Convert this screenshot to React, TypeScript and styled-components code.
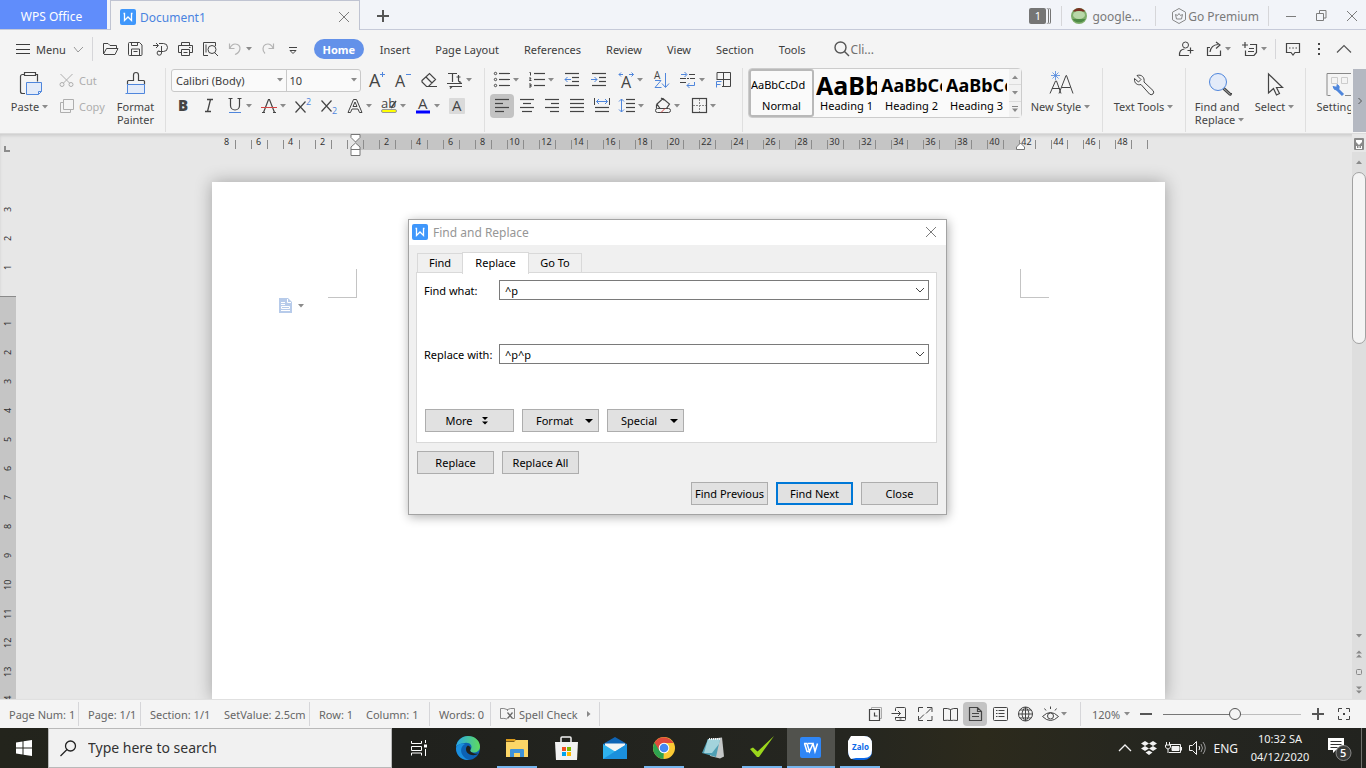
import React from "react";
import styled, { createGlobalStyle, css } from "styled-components";

const ui = `"Noto Sans", "Liberation Sans", sans-serif`;
const blue = "#4f86dc";

const Global = createGlobalStyle`
  *, *::before, *::after { box-sizing: border-box; }
  html, body, #root { height: 100%; }
  body { margin: 0; font: 11px/13px ${ui}; color: #3c3c3c; background: #e7e7e7; overflow: hidden; }
  button, input, select { font: inherit; color: inherit; margin: 0; padding: 0; border: 0; background: none; border-radius: 0; outline: 0; }
  button { cursor: pointer; white-space: nowrap; }
`;

/* ---------- shared pieces ---------- */

const Svg = styled.svg`
  flex: none;
  display: block;
  overflow: visible;
  fill: none;
  stroke: currentColor;
  text { stroke: none; fill: currentColor; font-family: "Open Sans", ${ui}; }
`;

type IconProps = { w?: number; h?: number; children: React.ReactNode };
const Icon = ({ w = 20, h = 20, children }: IconProps) => (
  <Svg width={w} height={h} viewBox={`0 0 ${w} ${h}`} aria-hidden="true">{children}</Svg>
);

const Caret = ({ up = false }: { up?: boolean }) => (
  <Icon w={8} h={4}>
    <path d={up ? "M1 4L4 0.5L7 4z" : "M1 0h6L4 3.5z"} fill="#8b8b8b" stroke="none" />
  </Icon>
);

const Spacer = styled.div`flex: 1;`;

const Rule = styled.span<{ $h: number }>`
  flex: none;
  width: 1px;
  height: ${(p) => p.$h}px;
  background: #d6d6d9;
`;

/* ---------- window frame ---------- */

const Shell = styled.div`
  display: flex;
  flex-direction: column;
  height: 100vh;
  overflow: hidden;
`;

const TitleBar = styled.header`
  flex: none;
  display: flex;
  height: 30px;
  background: #f2f4f9;
  box-shadow: inset 0 -1px #c6cad9;
`;

const OfficeTab = styled.button`
  width: 107px;
  height: 29px;
  margin-right: 3px;
  padding: 3px 4px 0 0;
  background: #608dfb;
  color: #fff;
  font-size: 12px;
`;

const DocTab = styled.div`
  display: flex;
  align-items: center;
  gap: 4px;
  width: 250px;
  padding: 3px 9px 0;
  border: solid #c0c4d2;
  border-width: 1px 1px 0;
  background: #f4f4f4;
  color: #4a83e0;
  font-size: 12px;
`;

const PlainButton = styled.button<{ $w: number }>`
  flex: none;
  display: flex;
  align-items: center;
  justify-content: center;
  width: ${(p) => p.$w}px;
  color: #7c7c7c;
`;

const TitleRight = styled.div`
  display: flex;
  align-items: center;
  padding-top: 2px;
  color: #7a7a7a;
  font-size: 12px;
`;

const Badge = styled.span`
  width: 17px;
  height: 16px;
  border-radius: 2px;
  background: #757575;
  color: #fff;
  font-size: 11px;
  line-height: 16px;
  text-align: center;
  box-shadow: 2px 0 #f2f4f9, 3px 0 #757575, 4px 0 #f2f4f9, 5px 0 #757575;
`;

const UserName = styled.button`margin: 0 14px 0 5px;`;

const Premium = styled.button`
  display: flex;
  align-items: center;
  gap: 1px;
  margin: 0 9px 0 15px;
`;

const WindowButtons = styled.div`
  display: flex;
  padding-left: 9px;
`;

/* ---------- menu row ---------- */

const MenuRow = styled.nav`
  flex: none;
  display: flex;
  align-items: center;
  height: 38px;
  padding: 0 11px 0 16px;
  background: #f4f4f4;
`;

const MenuButton = styled.button`
  display: flex;
  align-items: center;
  gap: 6px;
  margin-right: 8px;
`;

const QuickTools = styled.div<{ $left: number; $gap?: number }>`
  display: flex;
  align-items: center;
  gap: ${(p) => p.$gap ?? 5}px;
  padding-left: ${(p) => p.$left}px;
`;

const Tool = styled.button<{ $on?: boolean; $dim?: boolean }>`
  flex: none;
  display: flex;
  align-items: center;
  height: 20px;
  color: ${(p) => (p.$dim ? "#b4b4b4" : "#444")};
  ${(p) => p.$on && css`
    background: #c3c3c3;
    border-radius: 2px;
    box-shadow: 0 0 0 2px #c3c3c3;
  `}
`;

const Tabs = styled.div`
  display: flex;
  align-items: center;
  gap: 25px;
`;

const Tab = styled.button`height: 20px;`;

const HomeTab = styled.button`
  width: 50px;
  height: 20px;
  margin: 0 16px 0 11px;
  border-radius: 10px;
  background: #6391e9;
  color: #fff;
  font-weight: 700;
`;

const SearchBox = styled.button`
  display: flex;
  align-items: center;
  gap: 1px;
  margin-left: 28px;
  color: #707070;
  font-size: 12px;
`;

/* ---------- ribbon ---------- */

const Ribbon = styled.section`
  flex: none;
  display: flex;
  height: 66px;
  background: #f4f4f4;
  box-shadow: inset 0 -1px #dcdcdc;
`;

const RibbonTrack = styled.div`
  flex: 1;
  min-width: 0;
  display: flex;
  height: 64px;
  overflow: hidden;
`;

const Group = styled.div<{ $l: number; $r: number; $gap?: number }>`
  flex: none;
  display: flex;
  align-items: flex-start;
  gap: ${(p) => p.$gap ?? 0}px;
  padding: 0 ${(p) => p.$r}px 0 ${(p) => p.$l}px;
  border-right: 1px solid #dfdfdf;
`;

const Rows = styled.div`
  display: flex;
  flex-direction: column;
  gap: 4px;
  padding-top: 1px;
`;

const Row = styled.div<{ $gap: number; $l?: number }>`
  display: flex;
  align-items: center;
  gap: ${(p) => p.$gap}px;
  height: 22px;
  padding-left: ${(p) => p.$l ?? 0}px;
`;

const BigButton = styled.button<{ $w: number }>`
  flex: none;
  display: flex;
  flex-direction: column;
  align-items: center;
  gap: 3px;
  width: ${(p) => p.$w}px;
  padding-top: 3px;
  color: #444;
`;

const BigLabel = styled.span`
  display: flex;
  align-items: center;
  text-align: center;
  gap: 2px;
`;

const SmallAction = styled.button`
  display: flex;
  align-items: center;
  gap: 4px;
  width: 46px;
  color: #aeaeae;
`;

const FontBox = styled.div`
  display: flex;
  width: 190px;
  height: 23px;
  border: 1px solid #c9c9c9;
  border-radius: 3px;
  background: #fafafa;
`;

const SelectWrap = styled.label<{ $w: number }>`
  display: flex;
  align-items: center;
  width: ${(p) => p.$w}px;
  padding: 0 2px 0 4px;
  & + & { border-left: 1px solid #c9c9c9; padding-left: 2px; }
`;

const Select = styled.select`
  flex: 1;
  min-width: 0;
  height: 20px;
  appearance: none;
`;

const Gallery = styled.div`
  display: flex;
  width: 274px;
  height: 50px;
  border: 1px solid #cccccc;
  border-radius: 4px;
  background: #fafafa;
`;

const StyleCard = styled.button<{ $on?: boolean }>`
  flex: none;
  display: flex;
  flex-direction: column;
  width: 65px;
  height: 48px;
  border: 2px solid ${(p) => (p.$on ? "#b9b9b9" : "transparent")};
  border-radius: 3px;
  overflow: hidden;
  color: #000;
`;

const Sample = styled.span<{ $size: number }>`
  width: 100%;
  height: 28px;
  overflow: hidden;
  font-size: ${(p) => p.$size}px;
  font-weight: ${(p) => (p.$size > 11 ? 700 : 400)};
  line-height: 28px;
  text-align: left;
`;

const SampleName = styled.span`
  width: 100%;
  text-align: center;
`;

const GalleryScroll = styled.div`
  flex: 1;
  display: flex;
  flex-direction: column;
`;

const GalleryButton = styled.button`
  flex: 1;
  display: flex;
  align-items: center;
  justify-content: center;
  background: #f2f2f2;
  & + & { border-top: 1px solid #dcdcdc; }
`;

const RibbonScroll = styled.button`
  width: 13px;
  height: 63px;
  margin: 1px 0 0 2px;
  display: flex;
  align-items: center;
  justify-content: center;
  background: #b4b8c1;
  color: #555;
`;

/* ---------- workspace ---------- */

const Workspace = styled.main`
  position: relative;
  flex: 1;
  min-height: 0;
  display: flex;
  background: #e7e7e7;
  overflow: hidden;
  box-shadow: inset 0 2px 3px #cfcfcf;
`;

const SideRuler = styled.div`
  flex: none;
  width: 16px;
  display: flex;
  flex-direction: column;
  color: #333;
  font-size: 9px;
`;

const Corner = styled.div`
  height: 61px;
  padding: 12px 0 0 4px;
  color: #8c8c8c;
`;

const SideNumber = styled.span`
  flex: none;
  width: 16px;
  height: 29px;
  line-height: 16px;
  text-align: center;
  writing-mode: vertical-rl;
  transform: rotate(180deg);
`;

const SideDark = styled.div`
  flex: 1;
  min-height: 0;
  margin-top: 14px;
  padding-top: 12px;
  border-top: 1px solid #8a8a8a;
  background: #c5c5c5;
  display: flex;
  flex-direction: column;
  overflow: hidden;
`;

const Canvas = styled.div`
  flex: 1;
  min-width: 0;
  display: flex;
  flex-direction: column;
  align-items: center;
`;

const TopRuler = styled.div`
  position: relative;
  flex: none;
  display: flex;
  height: 16px;
  background: linear-gradient(90deg, transparent 135px, #c5c5c5 135px, #c5c5c5 800px, transparent 800px);
  color: #333;
  font-size: 9px;
`;

const RulerCell = styled.span`
  width: 32px;
  height: 16px;
  line-height: 16px;
  padding-right: 19px;
  display: flex;
  justify-content: center;
  background:
    linear-gradient(#8c8c8c, #8c8c8c) 15px 6px / 1px 9px no-repeat,
    linear-gradient(#8c8c8c, #8c8c8c) 31px 6px / 1px 9px no-repeat;
`;

const Marker = styled.span<{ $x: number; $y: number }>`
  position: absolute;
  left: ${(p) => p.$x}px;
  top: ${(p) => p.$y}px;
  color: #777;
`;

const Page = styled.article`
  flex: 1;
  width: 953px;
  margin: 32px 0 0 9px;
  padding: 87px 116px 0;
  background: #fff;
  box-shadow: 0 0 16px rgba(0, 0, 0, 0.3);
`;

const Margins = styled.div`
  display: flex;
  justify-content: space-between;
`;

const Crop = styled.span<{ $side: "left" | "right" }>`
  width: 29px;
  height: 29px;
  border: 0 solid #c4c4c4;
  border-bottom-width: 1px;
  ${(p) => (p.$side === "left" ? "border-right-width" : "border-left-width")}: 1px;
`;

const PasteHint = styled.button`
  display: flex;
  align-items: center;
  gap: 5px;
  margin-left: -49px;
`;

const ScrollColumn = styled.div`
  flex: none;
  width: 14px;
  display: flex;
  flex-direction: column;
  align-items: center;
  background: #dedede;
  color: #8a8a8a;
`;

const ScrollTop = styled.button`
  width: 14px;
  height: 18px;
  background: #e7e7e7;
`;

const ScrollButton = styled.button`
  display: flex;
  align-items: center;
  justify-content: center;
  width: 14px;
  height: 18px;
`;

const ScrollUp = styled(ScrollButton)`height: 20px;`;

const Thumb = styled.div`
  width: 14px;
  height: 172px;
  border: 1px solid #a2a2a2;
  border-radius: 7px;
  background: #f4f4f4;
`;

/* ---------- dialog ---------- */

const Dialog = styled.form`
  position: absolute;
  top: 85px;
  left: calc(50% - 275px);
  width: 539px;
  border: 1px solid #a3a3a3;
  background: #f0f0f0;
  box-shadow: 1px 2px 10px rgba(0, 0, 0, 0.32);
  color: #000;
`;

const DialogTitle = styled.div`
  display: flex;
  align-items: center;
  gap: 5px;
  height: 25px;
  padding: 0 8px 1px 3px;
  background: #fff;
  color: #969696;
  font-size: 12px;
`;

const DialogTabs = styled.div`
  display: flex;
  align-items: flex-end;
  height: 28px;
  padding-left: 8px;
`;

const DialogTab = styled.button<{ $w: number; $on?: boolean }>`
  width: ${(p) => p.$w}px;
  height: ${(p) => (p.$on ? 22 : 20)}px;
  padding-bottom: 2px;
  border: 1px solid #d9d9d9;
  border-bottom: 0;
  ${(p) => p.$on && css`
    margin: 0 -1px -1px;
    background: #fff;
    z-index: 1;
  `}
`;

const DialogPanel = styled.div`
  display: flex;
  flex-direction: column;
  gap: 44px;
  height: 171px;
  margin: -1px 9px 8px 7px;
  padding: 7px 7px 10px;
  border: 1px solid #d9d9d9;
  background: #fff;
`;

const Field = styled.div`
  display: flex;
  align-items: center;
  height: 20px;
`;

const FieldLabel = styled.label`width: 75px; white-space: nowrap;`;

const Combo = styled.div`
  flex: 1;
  display: flex;
  align-items: center;
  height: 20px;
  border: 1px solid #7a7a7a;
  background: #fff;
`;

const ComboInput = styled.input`
  flex: 1;
  min-width: 0;
  height: 18px;
  padding-left: 5px;
`;

const ButtonRow = styled.div<{ $end?: boolean }>`
  display: flex;
  gap: 8px;
  padding: ${(p) => (p.$end ? "8px 8px 9px" : "0 8px")};
  justify-content: ${(p) => (p.$end ? "flex-end" : "flex-start")};
`;

const PanelButtons = styled.div`
  display: flex;
  gap: 8px;
  margin-top: auto;
  padding-left: 1px;
`;

const PushButton = styled.button<{ $wide?: boolean; $main?: boolean }>`
  display: flex;
  align-items: center;
  justify-content: center;
  gap: 8px;
  width: ${(p) => (p.$wide ? 89 : 77)}px;
  height: 23px;
  padding-right: ${(p) => (p.$wide ? 5 : 0)}px;
  border: ${(p) => (p.$main ? "2px solid #0078d7" : "1px solid #adadad")};
  background: #e1e1e1;
`;

const DropButton = styled(PushButton)`
  justify-content: space-between;
  padding: 0 5px 0 13px;
`;

/* ---------- status bar ---------- */

const StatusBar = styled.footer`
  flex: none;
  display: flex;
  align-items: center;
  height: 29px;
  background: #f4f4f4;
  border-top: 1px solid #e0e0e0;
  color: #666;
`;

const Stat = styled.span<{ $w: number }>`
  flex: none;
  display: flex;
  align-items: center;
  gap: 4px;
  width: ${(p) => p.$w}px;
  height: 24px;
  padding-left: 9px;
  white-space: nowrap;
`;

const SpellButton = styled.button`
  display: flex;
  align-items: center;
  gap: 4px;
`;

const ViewTools = styled.div`
  display: flex;
  align-items: center;
  gap: 5px;
  padding-right: 12px;
`;

const Zoom = styled.div`
  display: flex;
  align-items: center;
  padding: 0 8px 0 11px;
`;

const ZoomValue = styled.button`
  display: flex;
  align-items: center;
  gap: 3px;
  width: 42px;
`;

const Slider = styled.input`
  width: 138px;
  height: 14px;
  margin: 0 5px;
  appearance: none;
  background: linear-gradient(90deg, #777 52%, #bdbdbd 52%) center / 100% 1px no-repeat;
  &::-webkit-slider-thumb {
    appearance: none;
    width: 12px;
    height: 12px;
    border: 1px solid #555;
    border-radius: 50%;
    background: #f4f4f4;
  }
`;

/* ---------- task bar ---------- */

const TaskBar = styled.footer`
  flex: none;
  display: flex;
  height: 40px;
  background: linear-gradient(90deg, #23241c, #20211d 30%, #252620 62%, #2c2a1c 72%, #252620 85%, #22231f);
  color: #fff;
`;

const StartButton = styled.button`
  width: 48px;
  display: flex;
  align-items: center;
  justify-content: center;
`;

const SearchField = styled.label`
  display: flex;
  align-items: center;
  gap: 11px;
  width: 344px;
  margin-right: 3px;
  padding-left: 11px;
  border: 1px solid #b9b9b9;
  background: #f1f1f1;
  color: #222;
`;

const SearchInput = styled.input`
  flex: 1;
  min-width: 0;
  font-size: 14px;
  line-height: 20px;
  &::placeholder { color: #333; opacity: 1; }
`;

const Apps = styled.div`
  display: flex;
  gap: 1px;
`;

const AppButton = styled.button<{ $state?: "open" | "active" }>`
  width: 48px;
  height: 40px;
  display: flex;
  align-items: center;
  justify-content: center;
  ${(p) => p.$state === "open" && css`
    background: linear-gradient(#76b5ee, #76b5ee) center bottom / 40px 2px no-repeat;
  `}
  ${(p) => p.$state === "active" && css`
    background: linear-gradient(#76b5ee, #76b5ee) center bottom / 48px 2px no-repeat, #51524d;
  `}
`;

const Tray = styled.div`
  display: flex;
  align-items: center;
  gap: 4px;
  color: #f2f2f2;
`;

const TrayText = styled.span`
  margin: 0 7px 0 2px;
  font-size: 12px;
`;

const Clock = styled.time`
  width: 62px;
  font-size: 11px;
  line-height: 18px;
  text-align: center;
  white-space: nowrap;
`;

const Notices = styled.button`margin: 0 4px 0 12px;`;

const DesktopEdge = styled.button`
  align-self: stretch;
  width: 5px;
  border-left: 1px solid #70716d;
`;

/* ---------- icon drawings ---------- */

const WpsMark = ({ size }: { size: number }) => (
  <Svg width={size} height={size} viewBox="0 0 16 16" aria-hidden="true">
    <rect width="16" height="16" rx="2" fill="#3f97fb" stroke="none" />
    <path d="M3.5 4.5h1v7l3.500-3.500 3.500 3.500v-7h1" stroke="#fff" strokeWidth="1.300" />
  </Svg>
);

const Cross = ({ size = 12 }: { size?: number }) => (
  <Icon w={size} h={size}><path d={`M1 1L${size - 1} ${size - 1}M${size - 1} 1L1 ${size - 1}`} /></Icon>
);

const lines = (rows: [number, number, number][]) =>
  rows.map(([x1, x2, y], i) => <path key={i} d={`M${x1} ${y}.5H${x2}`} strokeWidth="1.200" />);

const quick = {
  open: <Icon><path d="M3.500 15V4.500h4.500l2 2h6.500v3M3.500 15l3-5.500H18L15 15.500H4" /></Icon>,
  save: <Icon><path d="M3.500 4.500a1 1 0 0 1 1-1h10l2.500 2.500v9.500a1 1 0 0 1-1 1h-11.500a1 1 0 0 1-1-1zM6.500 3.500v3h6v-3M6.500 16.500v-6.500h8v6.500M8.500 12.500h4" /></Icon>,
  pdf: <Icon><path d="M3 6.500h5M6 4l2.500 2.500L6 9M10 4.500h3.500a4 4 0 0 1 0 8H8.500M11.500 7v7a2.200 2.200 0 1 1-2.200-2.200M9 4.500h2.500" /></Icon>,
  print: <Icon><path d="M6.500 6.500v-3h8v3M6 13.500H3.500v-7h14v7H15M6.500 10.500h8v6h-8zM8.500 13.500h4M14 8.500h1.500" /></Icon>,
  preview: <Icon><path d="M8 16.500H3.500v-13h12V7M12 14.500a4 4 0 1 0 0-8 4 4 0 0 0 0 8M14.500 13.500l3.500 3.500M6 5.500v8" /></Icon>,
  undo: <Icon><path d="M4.500 4.500v5h5M5 9c2-4 5-4.500 7.500-3.500 4 2 3 8-2.500 10" strokeWidth="1.200" /></Icon>,
  redo: <Icon><path d="M15.500 4.500v5h-5M15 9c-2-4-5-4.500-7.500-3.500-3 1.500-3.500 6-.5 9" strokeWidth="1.200" /></Icon>,
  more: <Icon><path d="M6 8.500h8M7 11.500l3 3 3-3z" /></Icon>,
};

const A = ({ x = 3, y = 16, s = 17 }: { x?: number; y?: number; s?: number }) => (
  <text x={x} y={y} fontSize={s} fontWeight="400">A</text>
);

const fontIcons = {
  grow: <Icon><A x={2} s={18} y={17} /><path d="M15.500 2v5M13 4.500h5" stroke={blue} /></Icon>,
  shrink: <Icon><A x={2} s={16} y={17} /><path d="M13 4.500h5" stroke={blue} /></Icon>,
  erase: <Icon><path d="M3 10.500L10.500 3.500l6 6-7 7H7.500L3 12zM7 7l6 6M9 16.500h9" strokeWidth="1.200" /></Icon>,
  tt: <Icon><path d="M3 3.500h9M7.500 4v8M13.500 5v5.500q0 1.500 2 1M11.500 7h4M2 13.500h15M4.500 16.500H17M14 11.500l2.500 2M7 16.500l-2 2" strokeWidth="1.200" /></Icon>,
  bold: <Icon><text x="5" y="15" fontSize="15" fontWeight="800">B</text></Icon>,
  italic: <Icon><path d="M8 3.500h6M6 15.500h6M11.500 3.500l-3 12" strokeWidth="1.300" /></Icon>,
  underline: <Icon><path d="M5.500 3v6.500a4.500 4.500 0 0 0 9 0V3M3.500 2.500h4M12.500 2.500h4" strokeWidth="1.200" /><path d="M4 16.500h12" stroke={blue} /></Icon>,
  strike: <Icon><path d="M4.500 16.500L9.500 3.500h1L15.500 16.500M3 16.500h3M14 16.500h3" strokeWidth="1.200" /><path d="M2 11.500h16" stroke="#d64545" /></Icon>,
  sup: <Icon><path d="M2.500 5.500l10 11M12.500 5.500l-10 11" strokeWidth="1.200" /><text x="13" y="9" fontSize="9" style={{ fill: blue }}>2</text></Icon>,
  sub: <Icon><path d="M2.500 4.500l10 11M12.500 4.500l-10 11" strokeWidth="1.200" /><text x="13" y="18" fontSize="9" style={{ fill: blue }}>2</text></Icon>,
  outline: <Icon><path d="M3 16.500L8.500 3.500h3L17 16.500h-2.500l-1.500-3.500H7L5.500 16.500zM8 10.500h4L10 6z" /></Icon>,
  highlight: <Icon><text x="2" y="12" fontSize="13">ab</text><path d="M17 5l-5 7" strokeWidth="1.500" /><rect x="2.500" y="13.500" width="15" height="3" rx="1.500" fill="#ffff00" stroke="#999" /></Icon>,
  color: <Icon><A x={5} s={15} y={13} /><path d="M3 16h14" stroke="#0000ff" strokeWidth="3" /></Icon>,
  shade: <Icon><rect x="2" y="2" width="16" height="16" rx="1" fill="#dadada" stroke="none" /><A x={5} s={15} y={15} /></Icon>,
};

const paraIcons = {
  bullets: <Icon>{lines([[7, 18, 3], [7, 18, 9], [7, 18, 15]])}{[3.5, 9.5, 15.5].map((y) => <circle key={y} cx="3.500" cy={y} r="1.200" />)}</Icon>,
  numbers: <Icon>{lines([[7, 18, 3], [7, 18, 9], [7, 18, 15]])}<path d="M2.500 2.500h1v3M2 8h2l-1.500 2.500H4.500M2 14h2v3H2M4 15.500H2.500" /></Icon>,
  outdent: <Icon>{lines([[3, 17, 3], [10, 17, 7], [10, 17, 11], [3, 17, 15]])}<path d="M3 9.500h6M5.500 7L3 9.500 5.500 12" stroke={blue} /></Icon>,
  indent: <Icon>{lines([[3, 17, 3], [10, 17, 7], [10, 17, 11], [3, 17, 15]])}<path d="M2 9.500h6M5.500 7L8 9.500 5.500 12" stroke={blue} /></Icon>,
  scale: <Icon><A x={5} s={16} y={18} /><path d="M7 4.500H3M5 2.500L3 4.500l2 2M13 4.500h4.500M15.500 2.500l2 2-2 2" stroke={blue} /></Icon>,
  sort: <Icon><text x="3" y="9" fontSize="10">A</text><path d="M4 10.500h6L4 17.500h6.500" stroke={blue} /><path d="M14.500 3v14M11 13.500l3.500 4 3.500-4" stroke={blue} /></Icon>,
  marks: <Icon><path d="M11 4.500h6M12 8.500h5M2 12.500h6M9 8.500h2M2 8.500h6" /><path d="M3 4.500h5.500M6.500 2l2.500 2.500L6.500 7M16.500 12v3.500H9M11.500 13L9 15.500l2.500 2.500" stroke={blue} /></Icon>,
  grid: <Icon><path d="M4 10V2.500h13.500v14H9M10.500 2.500v14M4 9.500h13.500" /><path d="M3.500 17.500v-6h5M3.500 14.500h4" stroke={blue} /></Icon>,
  left: <Icon>{lines([[3, 17, 3], [3, 11, 7], [3, 17, 11], [3, 12, 15]])}</Icon>,
  center: <Icon>{lines([[3, 17, 3], [6, 14, 7], [3, 17, 11], [5, 15, 15]])}</Icon>,
  right: <Icon>{lines([[3, 17, 3], [9, 17, 7], [3, 17, 11], [8, 17, 15]])}</Icon>,
  justify: <Icon>{lines([[3, 17, 3], [3, 17, 7], [3, 17, 11], [3, 17, 15]])}</Icon>,
  spread: <Icon>{lines([[3, 17, 11], [3, 17, 15]])}<path d="M2.500 2v7M17.500 2v7" /><path d="M4.500 5.500h11M7 3L4.500 5.500 7 8M13 3L15.500 5.500 13 8" stroke={blue} /></Icon>,
  spacing: <Icon>{lines([[9, 18, 3], [9, 18, 7], [9, 18, 11], [9, 18, 15]])}<path d="M4.500 3v13M2 5.500L4.500 3 7 5.500M2 13.500L4.500 16 7 13.500" stroke={blue} /></Icon>,
  fill: <Icon><path d="M4 8l6-5.500L16.500 8l-3 4.500H7zM3.500 8.500v4M8 2l3 2" strokeWidth="1.200" /><rect x="2.500" y="12.500" width="15" height="4" rx="2" /><path d="M8 16.500l4-4" stroke="#d64545" /></Icon>,
  border: <Icon><rect x="3.500" y="2.500" width="14" height="14" strokeWidth="1.200" /><path d="M10.500 3v13M4 9.500h13" strokeDasharray="2 1" stroke="#888" /></Icon>,
};

const big = {
  paste: <Icon w={26} h={26}><path d="M7 3.500H5.500a2 2 0 0 0-2 2v15a2 2 0 0 0 2 2H8M19 3.500h1.500v7M7.500 1.500h11v3h-11z" strokeWidth="1.200" /><path d="M9.500 11.500h15v9l-3 3h-12zM24.500 20.500h-3v3" fill="#e3ebf9" stroke={blue} /></Icon>,
  painter: <Icon w={26} h={26}><path d="M4.500 13.500v-3q0-1 1-1h5V4q0-2.500 2.500-2.500T15.500 4v5.500h5q1 0 1 1v3" strokeWidth="1.200" /><path d="M4.500 13.500h17v9h-17q0-4.500 0-9zM2.500 22.500h2" fill="#e3ebf9" stroke={blue} /></Icon>,
  style: <Icon w={26} h={26}><path d="M2 22.500L7.500 10h1L13 22.500M4 17.500h8M11 22.500L18 4.500h.5L25 22.500M13.500 16.500h9" /><path d="M7.500 0v9M3 4.500h9M4.500 1.500l6 6M10.500 1.500l-6 6" stroke={blue} strokeWidth=".8" /></Icon>,
  wrench: <Icon w={26} h={26}><path d="M6 4.500l4 4-2.500 2.500-4-3.500c-.5 5 3 7 6.500 6l8.500 9.500q1.500 1.500 3.500 0 1.500-2 0-3.500L13 11c1-4.500-2.500-8-7-6.500z" /></Icon>,
  find: <Icon w={26} h={26}><path d="M17 16.500l7 6.500M16 18l6.500 6q2 .5 2-2" strokeWidth="1.200" /><circle cx="11" cy="11" r="8.500" fill="#e3ebf9" stroke={blue} /></Icon>,
  select: <Icon w={26} h={26}><path d="M6.500 3v19l5-4.500 3 6.500 3-1.500-3-6h6z" strokeWidth="1.200" /></Icon>,
  settings: <Icon w={26} h={26}><path d="M2 24.500V2.500h24M2.500 24.500h3M20 24.500h6" stroke="#888" /><path d="M6.500 6.500h6v6h-6zM16.500 6.500h6v6h-6z" stroke="#ccc" /><path d="M11 17l7 7" stroke={blue} strokeWidth="3" /><path d="M8 15.500q1 4 4 3.500t2-4l-2-1.500v2.500h-2z" fill={blue} stroke={blue} /></Icon>,
};

const status = {
  history: <Icon><path d="M6.500 5.500V3.500h10v11h-2" stroke="#aaa" /><path d="M4.500 5.500h10v11h-10zM9.500 8.500v3.500h3" strokeWidth="1.200" /></Icon>,
  phone: <Icon><path d="M5.500 7V4.500q0-1 1-1h8q1 0 1 1v11q0 1-1 1h-8q-1 0-1-1V13M1.500 9.500h9M8 7l2.500 2.500L8 12M5.500 13.500h10M9.500 15h2" /></Icon>,
  full: <Icon><path d="M3.500 8V3.500H8M12 3.500h5V8M3.500 12v4.500H8M12 16.500h5V12M16 4.500l-5 5M9 10.500l-5 5" /></Icon>,
  book: <Icon><path d="M10.500 5.500q-3-1.500-7-1v12q4-.5 7 0 3-.5 7 0v-12q-4-.5-7 1zv11" /></Icon>,
  page: <Icon><path d="M4.500 3.500h8l4 4v9h-12zM12.500 3.500v4h4M7 9.500h7M7 12.500h7" strokeWidth="1.200" /></Icon>,
  outline: <Icon><rect x="3.500" y="3.500" width="14" height="13" rx="1" /><path d="M8.500 6.500h6M8.500 9.500h6M8.500 12.500h6M6 6.500h1.500M6 9.500h1.500M6 12.500h1.500" strokeWidth="1.200" /></Icon>,
  web: <Icon><circle cx="10.500" cy="10" r="7" /><path d="M10.500 3v14M3.500 10h14M5 6h11M5 14h11M10.500 3c-4.500 4-4.500 10 0 14M10.500 3c4.500 4 4.500 10 0 14" /></Icon>,
  eye: <Icon><path d="M2.500 12.500q8-8 16 0-8 8-16 0zM6 6.500L4.500 4.500M10.500 5V2.500M15 6.500l1.500-2" /><circle cx="10.500" cy="12" r="3" /></Icon>,
};

const taskApps: { name: string; state?: "open" | "active"; art: React.ReactNode }[] = [
  {
    name: "Task view",
    art: (
      <Icon w={18} h={16}><path d="M1.500 1v2.500h10V1M1.500 6.500h10v4h-10zM1.500 15.500V13h10v2.500M15.500 0v3M15.500 9v7" /><path d="M14 6h3" strokeWidth="3" /></Icon>
    ),
  },
  {
    name: "Edge",
    art: (
      <Icon w={24} h={24}>
        <defs>
          <linearGradient id="edgeTop" x1="0" x2="1"><stop offset="0" stopColor="#2aa8e8" /><stop offset="1" stopColor="#5fdb5c" /></linearGradient>
        </defs>
        <g stroke="none">
          <circle cx="12" cy="12" r="12" fill="#0c61b4" />
          <path d="M0 11C1 4 6 0 12 0c7 0 12 5 12 10.500 0 4-3 6-6.500 6-3 0-4-1.500-3-2.500 3-4-1-8-5.500-7C4 7.500 1 9 0 11z" fill="url(#edgeTop)" />
          <path d="M0 12c1.500-4 6-5.500 9-4-4 2-5 7-2.500 11 1.500 2.500 4 4.500 6.500 5C5 24.500 0 19 0 12z" fill="#1b8fde" />
          <path d="M22.500 17.500C18 21 10 19 10 13c0-2 1-3 2-3.500 3 1 3 3 2.200 4.500-.7 2 4.800 4.500 8.300 3.500z" fill="#20211d" />
        </g>
      </Icon>
    ),
  },
  {
    name: "File Explorer", state: "open",
    art: (
      <Icon w={24} h={24}><g stroke="none"><path d="M1 3h9l1.500 2.500H1z" fill="#d99a1b" /><path d="M1 6l8 0 2-2h12v17H1z" fill="#fcd667" /><path d="M5 21v-7q0-1 1-1h12q1 0 1 1v7h-4v-4H9v4z" fill="#3f93d9" /></g></Icon>
    ),
  },
  {
    name: "Store",
    art: (
      <Icon w={24} h={24}><path d="M7 6V2q0-1 1-1h8q1 0 1 1v4" stroke="#f2f2f2" strokeWidth="1.500" /><g stroke="none"><path d="M1 6h23l-1 18H2z" fill="#f2f2f2" /><path d="M8 11h4v4H8z" fill="#f25022" /><path d="M13 11h4v4h-4z" fill="#7fba00" /><path d="M8 16h4v4H8z" fill="#00a4ef" /><path d="M13 16h4v4h-4z" fill="#ffb900" /></g></Icon>
    ),
  },
  {
    name: "Mail",
    art: (
      <Icon w={24} h={24}><g stroke="none"><path d="M0 8l12-7 12 7v5H0z" fill="#0f64b5" /><path d="M2 7.500h20v8H2z" fill="#f4f4f4" /><path d="M0 8l12 7.500L24 8v15H0z" fill="#2fb2ee" /><path d="M0 23L24 8v15z" fill="#1b90dd" /></g></Icon>
    ),
  },
  {
    name: "Chrome", state: "open",
    art: (
      <Icon w={24} h={24}><g stroke="none"><circle cx="12" cy="12" r="11" fill="#fbc934" /><path d="M2.500 6.500L12 12l-.5 11A11 11 0 0 1 2.500 6.500z" fill="#2ea24f" /><path d="M2.500 6.500A11 11 0 0 1 21.500 7H12l-5 7z" fill="#e04a3c" /><circle cx="12" cy="12" r="5.300" fill="#fff" /><circle cx="12" cy="12" r="4.300" fill="#4688f1" /></g></Icon>
    ),
  },
  {
    name: "Notepad",
    art: (
      <Icon w={24} h={24}><g stroke="none"><path d="M8 3l13-1.500 2 19-4 2L9 20z" fill="#c4c7c7" /><path d="M7 3h12l-4 18-14-4z" fill="#4f9fb4" /><path d="M7 3h12l-1 5-7 9-8 0z" fill="#a3d3dc" /></g><path d="M8 3h12" stroke="#f4f4f4" strokeDasharray="1 1" strokeWidth="2" /></Icon>
    ),
  },
  {
    name: "Checker", state: "open",
    art: <Icon w={24} h={24}><path d="M0 13l3-1.500 4.500 4L24 0 9 21H7z" fill="#9bd61c" stroke="none" /></Icon>,
  },
  {
    name: "WPS Writer", state: "active",
    art: (
      <Icon w={24} h={24}><rect x="1" y="1" width="21" height="21" rx="2" fill="#2f86f6" stroke="none" /><path d="M5 7.500h3l2.500 8 3.500-8h-5M14 7.500l2 8 2.500-8M14 7.500h-3M5.500 7.500L8 15.500h2.500" stroke="#fff" strokeWidth="1.500" /></Icon>
    ),
  },
  {
    name: "Zalo", state: "open",
    art: (
      <Icon w={24} h={24}><rect width="24" height="24" rx="8" fill="#0b68e8" stroke="none" /><path d="M3 0h13q8 0 8 8v6q0 8-8 8H8l-5 1Q0 20 0 14V5z" fill="#fff" stroke="none" /><text x="4" y="14" fontSize="8" fontWeight="700" style={{ fill: "#0b68e8" }}>Zalo</text></Icon>
    ),
  },
];

const rulerNumbers = [8, 6, 4, 2, 0, ...Array.from({ length: 24 }, (_, i) => (i + 1) * 2)];

/* ---------- sections ---------- */

const TitleSection = () => (
  <TitleBar>
    <OfficeTab>WPS Office</OfficeTab>
    <DocTab>
      <WpsMark size={16} />
      <span>Document1</span>
      <Spacer />
      <PlainButton $w={12} aria-label="Close tab"><Cross /></PlainButton>
    </DocTab>
    <PlainButton $w={46} aria-label="New tab"><Icon w={14} h={14}><path d="M7 2v12M1 8h12" strokeWidth="2" stroke="#555" /></Icon></PlainButton>
    <Spacer />
    <TitleRight>
      <Badge>1</Badge>
      <QuickTools $left={15} $gap={9}>
        <Rule $h={20} />
        <Icon w={16} h={16}>
          <g stroke="none"><circle cx="8" cy="8" r="8" fill="#7fae6b" /><path d="M3 2a8 8 0 0 1 10 0l1 1.500H2z" fill="#7a2f22" /><ellipse cx="8" cy="7" rx="6" ry="4" fill="#b8d8a8" /><path d="M1.500 11h13a8 8 0 0 1-13 0z" fill="#4e8a45" /></g>
        </Icon>
      </QuickTools>
      <UserName>google...</UserName>
      <Rule $h={20} />
      <Premium>
        <Icon w={16} h={16}><path d="M8 .5l6.500 3.700v7.600L8 15.500 1.500 11.800V4.200zM4.500 6.500l2 1L8 5.500l1.500 2 2-1-1 4.500h-5z" stroke="#888" /></Icon>
        Go Premium
      </Premium>
      <Rule $h={20} />
      <WindowButtons>
        <PlainButton $w={26} aria-label="Minimize"><Icon w={12} h={12}><path d="M1 6.500h10" /></Icon></PlainButton>
        <PlainButton $w={34} aria-label="Restore"><Icon w={12} h={12}><path d="M1.500 3.500h7v7h-7zM4.500 3V.5h6.500V8H9" /></Icon></PlainButton>
        <PlainButton $w={28} aria-label="Close"><Cross /></PlainButton>
      </WindowButtons>
    </TitleRight>
  </TitleBar>
);

const MenuSection = () => (
  <MenuRow>
    <MenuButton>
      <Icon w={14} h={14}><path d="M0 2.500h14M0 7.500h14M0 11.500h14" /></Icon>
      <span>Menu</span>
      <Icon w={12} h={12}><path d="M2 4l4 5 5-5" stroke="#999" /></Icon>
    </MenuButton>
    <Rule $h={24} />
    <QuickTools $left={7}>
      <Tool aria-label="Open">{quick.open}</Tool>
      <Tool aria-label="Save">{quick.save}</Tool>
      <Tool aria-label="Export to PDF">{quick.pdf}</Tool>
      <Tool aria-label="Print">{quick.print}</Tool>
      <Tool aria-label="Print preview">{quick.preview}</Tool>
      <Tool $dim aria-label="Undo">{quick.undo}<Caret /></Tool>
      <Tool $dim aria-label="Redo">{quick.redo}</Tool>
      <Tool aria-label="Customize">{quick.more}</Tool>
    </QuickTools>
    <HomeTab>Home</HomeTab>
    <Tabs>
      {["Insert", "Page Layout", "References", "Review", "View", "Section", "Tools"].map((t) => <Tab key={t}>{t}</Tab>)}
    </Tabs>
    <SearchBox>
      <Icon w={16} h={16}><circle cx="6.500" cy="6.500" r="5.500" stroke="#555" strokeWidth="1.400" /><path d="M10.500 10.500L15 15" stroke="#555" strokeWidth="1.400" /></Icon>
      Cli...
    </SearchBox>
    <Spacer />
    <QuickTools $left={0} $gap={8}>
      <Tool aria-label="Invite"><Icon><circle cx="9.500" cy="6" r="3" /><path d="M13 16.500H3.500q-.5-6 5-6.500M14.500 8.500v6M11.500 11.500h6" strokeWidth="1.200" /></Icon></Tool>
      <Tool aria-label="Share"><Icon><path d="M6 8.500H3.500v8h13v-5M6 13q1-7 8-7.500M12 3l4 3-4 3.500" strokeWidth="1.200" /></Icon><Caret /></Tool>
      <Tool aria-label="Add note"><Icon><path d="M10 5.500h6.500v8l-2.500 3H5.500v-5M9 9.500h5M8 12.500h6M5 3v6M2 6h6" strokeWidth="1.200" /></Icon><Caret /></Tool>
    </QuickTools>
    <QuickTools $left={7}>
      <Rule $h={20} />
      <QuickTools $left={2}>
        <Tool aria-label="Comments"><Icon><path d="M3.500 4.500h13v9h-4.500l-2 2.500-2-2.500H3.500zM6 9h1.500M9.300 9h1.500M12.500 9H14" strokeWidth="1.200" /></Icon></Tool>
      </QuickTools>
      <Tool aria-label="More"><Icon><path d="M11 4v2M11 9v2M11 14v2" strokeWidth="2" /></Icon></Tool>
      <PlainButton $w={22} aria-label="Collapse ribbon"><Icon w={16} h={16}><path d="M1 11.500l7-7 7 7" stroke="#555" strokeWidth="1.200" /></Icon></PlainButton>
    </QuickTools>
  </MenuRow>
);

const RibbonSection = () => (
  <Ribbon>
    <RibbonTrack>
      <Group $l={8} $r={6} $gap={7}>
        <BigButton $w={44}>{big.paste}<BigLabel>Paste<Caret /></BigLabel></BigButton>
        <Rows>
          <Row $gap={4}><SmallAction><Icon w={16} h={16}><circle cx="3" cy="12.500" r="2" /><circle cx="12" cy="12.500" r="2" /><path d="M1.500 2l9 9M13.500 2l-9 9" /></Icon>Cut</SmallAction></Row>
          <Row $gap={4}><SmallAction><Icon w={16} h={16}><path d="M4.500 1.500h10v10h-10zM4 4.500H1.500v10h10v-2.500" /></Icon>Copy</SmallAction></Row>
        </Rows>
        <BigButton $w={47}>{big.painter}<BigLabel>Format<br />Painter</BigLabel></BigButton>
      </Group>
      <Group $l={5} $r={11}>
        <Rows>
          <Row $gap={6}>
            <FontBox>
              <SelectWrap $w={115}><Select aria-label="Font"><option>Calibri (Body)</option></Select><Caret /></SelectWrap>
              <SelectWrap $w={74}><Select aria-label="Font size"><option>10</option></Select><Caret /></SelectWrap>
            </FontBox>
            <Tool aria-label="Grow font">{fontIcons.grow}</Tool>
            <Tool aria-label="Shrink font">{fontIcons.shrink}</Tool>
            <Tool aria-label="Clear formatting">{fontIcons.erase}</Tool>
            <Tool aria-label="Change case">{fontIcons.tt}<Caret /></Tool>
          </Row>
          <Row $gap={6} $l={2}>
            <Tool aria-label="Bold">{fontIcons.bold}</Tool>
            <Tool aria-label="Italic">{fontIcons.italic}</Tool>
            <Tool aria-label="Underline">{fontIcons.underline}<Caret /></Tool>
            <Tool aria-label="Strikethrough">{fontIcons.strike}<Caret /></Tool>
            <Tool aria-label="Superscript">{fontIcons.sup}</Tool>
            <Tool aria-label="Subscript">{fontIcons.sub}</Tool>
            <Tool aria-label="Text effects">{fontIcons.outline}<Caret /></Tool>
            <Tool aria-label="Highlight">{fontIcons.highlight}<Caret /></Tool>
            <Tool aria-label="Font color">{fontIcons.color}<Caret /></Tool>
            <Tool aria-label="Shading">{fontIcons.shade}</Tool>
          </Row>
        </Rows>
      </Group>
      <Group $l={7} $r={9}>
        <Rows>
          <Row $gap={7}>
            <Tool aria-label="Bullets">{paraIcons.bullets}<Caret /></Tool>
            <Tool aria-label="Numbering">{paraIcons.numbers}<Caret /></Tool>
            <Tool aria-label="Decrease indent">{paraIcons.outdent}</Tool>
            <Tool aria-label="Increase indent">{paraIcons.indent}</Tool>
            <Tool aria-label="Character scaling">{paraIcons.scale}<Caret /></Tool>
            <Tool aria-label="Sort">{paraIcons.sort}</Tool>
            <Tool aria-label="Show marks">{paraIcons.marks}<Caret /></Tool>
            <Tool aria-label="Insert table">{paraIcons.grid}</Tool>
          </Row>
          <Row $gap={5}>
            <Tool $on aria-label="Align left">{paraIcons.left}</Tool>
            <Tool aria-label="Center">{paraIcons.center}</Tool>
            <Tool aria-label="Align right">{paraIcons.right}</Tool>
            <Tool aria-label="Justify">{paraIcons.justify}</Tool>
            <Tool aria-label="Distribute">{paraIcons.spread}</Tool>
            <Row $gap={8}>
              <Tool aria-label="Line spacing">{paraIcons.spacing}<Caret /></Tool>
              <Tool aria-label="Fill color">{paraIcons.fill}<Caret /></Tool>
              <Tool aria-label="Borders">{paraIcons.border}<Caret /></Tool>
            </Row>
          </Row>
        </Rows>
      </Group>
      <Group $l={5} $r={11} $gap={9}>
        <Gallery>
          <StyleCard $on><Sample $size={11}>AaBbCcDd</Sample><SampleName>Normal</SampleName></StyleCard>
          <StyleCard><Sample $size={25}>AaBbCc</Sample><SampleName>Heading 1</SampleName></StyleCard>
          <StyleCard><Sample $size={18}>AaBbCc</Sample><SampleName>Heading 2</SampleName></StyleCard>
          <StyleCard><Sample $size={18}>AaBbCc</Sample><SampleName>Heading 3</SampleName></StyleCard>
          <GalleryScroll>
            <GalleryButton aria-label="Previous styles"><Caret up /></GalleryButton>
            <GalleryButton aria-label="Next styles"><Caret /></GalleryButton>
            <GalleryButton aria-label="All styles"><Icon w={8} h={8}><path d="M1 1.500h6" stroke="#888" /><path d="M1 3.500h6L4 7z" stroke="none" fill="#888" /></Icon></GalleryButton>
          </GalleryScroll>
        </Gallery>
        <BigButton $w={60}>{big.style}<BigLabel>New Style<Caret /></BigLabel></BigButton>
      </Group>
      <Group $l={10} $r={10}>
        <BigButton $w={62}>{big.wrench}<BigLabel>Text Tools<Caret /></BigLabel></BigButton>
      </Group>
      <Group $l={10} $r={9} $gap={10}>
        <BigButton $w={48}>{big.find}<span><BigLabel>Find and</BigLabel><BigLabel>Replace<Caret /></BigLabel></span></BigButton>
        <BigButton $w={42}>{big.select}<BigLabel>Select<Caret /></BigLabel></BigButton>
      </Group>
      <Group $l={10} $r={0}>
        <BigButton $w={43}>{big.settings}<BigLabel>Settings</BigLabel></BigButton>
      </Group>
    </RibbonTrack>
    <RibbonScroll aria-label="Scroll ribbon"><Icon w={8} h={8}><path d="M2.500 1l3 3-3 3" /></Icon></RibbonScroll>
  </Ribbon>
);

const FindDialog = () => (
  <Dialog onSubmit={(e) => e.preventDefault()} aria-label="Find and Replace">
    <DialogTitle>
      <WpsMark size={16} />
      <span>Find and Replace</span>
      <Spacer />
      <PlainButton $w={14} type="button" aria-label="Close dialog"><Cross /></PlainButton>
    </DialogTitle>
    <DialogTabs role="tablist">
      <DialogTab $w={46} type="button" role="tab">Find</DialogTab>
      <DialogTab $w={67} $on type="button" role="tab" aria-selected="true">Replace</DialogTab>
      <DialogTab $w={54} type="button" role="tab">Go To</DialogTab>
    </DialogTabs>
    <DialogPanel>
      <Field>
        <FieldLabel htmlFor="find">Find what:</FieldLabel>
        <Combo>
          <ComboInput id="find" defaultValue="^p" />
          <PlainButton $w={17} type="button" aria-label="Recent searches"><Icon w={10} h={6}><path d="M1 1l4 4 4-4" stroke="#444" /></Icon></PlainButton>
        </Combo>
      </Field>
      <Field>
        <FieldLabel htmlFor="replace">Replace with:</FieldLabel>
        <Combo>
          <ComboInput id="replace" defaultValue="^p^p" />
          <PlainButton $w={17} type="button" aria-label="Recent replacements"><Icon w={10} h={6}><path d="M1 1l4 4 4-4" stroke="#444" /></Icon></PlainButton>
        </Combo>
      </Field>
      <PanelButtons>
        <PushButton $wide type="button">More<Icon w={8} h={8}><path d="M1 0h6L4 3zM1 4.500h6L4 7.500z" fill="#000" stroke="none" /></Icon></PushButton>
        <DropButton type="button">Format<Icon w={8} h={4}><path d="M0 0h8L4 4z" fill="#000" stroke="none" /></Icon></DropButton>
        <DropButton type="button">Special<Icon w={8} h={4}><path d="M0 0h8L4 4z" fill="#000" stroke="none" /></Icon></DropButton>
      </PanelButtons>
    </DialogPanel>
    <ButtonRow>
      <PushButton type="button">Replace</PushButton>
      <PushButton type="button">Replace All</PushButton>
    </ButtonRow>
    <ButtonRow $end>
      <PushButton type="button">Find Previous</PushButton>
      <PushButton $main type="submit">Find Next</PushButton>
      <PushButton type="button">Close</PushButton>
    </ButtonRow>
  </Dialog>
);

const WorkSection = () => (
  <Workspace>
    <SideRuler>
      <Corner><Icon w={6} h={6}><path d="M1 0v5h5" strokeWidth="2" /></Icon></Corner>
      {[3, 2, 1].map((n) => <SideNumber key={n}>{n}</SideNumber>)}
      <SideDark>
        {Array.from({ length: 14 }, (_, i) => <SideNumber key={i}>{i + 1}</SideNumber>)}
      </SideDark>
    </SideRuler>
    <Canvas>
      <TopRuler>
        {rulerNumbers.map((n, i) => <RulerCell key={i}>{n || ""}</RulerCell>)}
        <Marker $x={130} $y={0}>
          <Icon w={11} h={22}><path d="M1 .5h9v3L5.500 8 1 3.500zM5.500 9L10 13v8.500H1V13zM1 15.500h9" fill="#fff" /></Icon>
        </Marker>
        <Marker $x={796} $y={8}>
          <Icon w={9} h={8}><path d="M4.500 1L8.500 5v2.500h-8V5z" fill="#fff" /></Icon>
        </Marker>
      </TopRuler>
      <Page>
        <Margins><Crop $side="left" /><Crop $side="right" /></Margins>
        <PasteHint aria-label="Paragraph options">
          <Icon w={13} h={15}><path d="M0 0h9l4 4v11H0z" fill="#b7cbea" stroke="none" /><path d="M8.500 1v3.500H12M2 4.500h4M2 6.500h4M2 12.500h9M2.500 8.500h8v2h-8z" stroke="#fff" /></Icon>
          <Caret />
        </PasteHint>
      </Page>
    </Canvas>
    <ScrollColumn>
      <ScrollTop aria-label="Toggle ruler"><Icon w={14} h={18}><rect x="2" y="4" width="10" height="12" rx="1" fill="#8a8a8a" stroke="none" /><path d="M4 6h6v2L7 11 4 8zM4 12h1v2h1.500v-2h1v2H9v-2h1v3H4z" fill="#fff" stroke="none" /></Icon></ScrollTop>
      <ScrollUp aria-label="Scroll up"><Caret up /></ScrollUp>
      <Thumb />
      <Spacer />
      <ScrollButton aria-label="Scroll down"><Caret /></ScrollButton>
      <ScrollButton aria-label="Previous page"><Icon w={8} h={8}><path d="M1 3.500h6L4 .5zM1 7.500h6L4 4.500z" fill="currentColor" stroke="none" /></Icon></ScrollButton>
      <ScrollButton aria-label="Browse by"><Icon w={8} h={8}><rect x="1.500" y="1.500" width="5" height="5" rx="1" /></Icon></ScrollButton>
      <ScrollButton aria-label="Next page"><Icon w={8} h={8}><path d="M1 .5h6L4 3.500zM1 4.500h6L4 7.500z" fill="currentColor" stroke="none" /></Icon></ScrollButton>
    </ScrollColumn>
    <FindDialog />
  </Workspace>
);

const StatusSection = () => (
  <StatusBar>
    <Stat $w={78}>Page Num: 1</Stat><Rule $h={24} />
    <Stat $w={61}>Page: 1/1</Stat><Rule $h={24} />
    <Stat $w={74}>Section: 1/1</Stat>
    <Stat $w={94}>SetValue: 2.5cm</Stat><Rule $h={24} />
    <Stat $w={47}>Row: 1</Stat>
    <Stat $w={72}>Column: 1</Stat><Rule $h={24} />
    <Stat $w={60}>Words: 0</Stat><Rule $h={24} />
    <Stat $w={108}>
      <SpellButton>
        <Icon w={15} h={14}><path d="M7 2.500q-3-1.500-6.500-1v10q3.500-.5 6.500.5M7.500 2.500q3-1.500 7-1v10h-2M7.500 2v2" stroke="#888" /><path d="M7.500 5.500l5 6M12.500 5.500l-5 6" strokeWidth="1.300" /></Icon>
        Spell Check
      </SpellButton>
      <Spacer />
      <Icon w={12} h={8}><path d="M0 1l3.500 3L0 7z" fill="#888" stroke="none" /></Icon>
    </Stat>
    <Rule $h={24} />
    <Spacer />
    <ViewTools>
      <Tool aria-label="History">{status.history}</Tool>
      <Tool aria-label="Send to phone">{status.phone}</Tool>
      <Tool aria-label="Full screen">{status.full}</Tool>
      <Tool aria-label="Reading view">{status.book}</Tool>
      <Tool $on aria-label="Page view">{status.page}</Tool>
      <Tool aria-label="Outline view">{status.outline}</Tool>
      <Tool aria-label="Web view">{status.web}</Tool>
      <Tool aria-label="Eye protection">{status.eye}<Caret /></Tool>
    </ViewTools>
    <Rule $h={24} />
    <Zoom>
      <ZoomValue>120%<Caret /></ZoomValue>
      <PlainButton $w={24} aria-label="Zoom out"><Icon w={12} h={12}><path d="M0 6h12" stroke="#555" strokeWidth="2" /></Icon></PlainButton>
      <Slider type="range" min={0} max={100} defaultValue={52} aria-label="Zoom" />
      <PlainButton $w={24} aria-label="Zoom in"><Icon w={12} h={12}><path d="M0 6h12M6 0v12" stroke="#555" strokeWidth="2" /></Icon></PlainButton>
      <PlainButton $w={28} aria-label="Fit page"><Icon w={14} h={14}><path d="M1.500 5V1.500H5M9 1.500h3.500V5M12.500 9v3.500H9M5 12.500H1.500V9" stroke="#444" /><path d="M6 7h2" stroke="#444" strokeWidth="2" /></Icon></PlainButton>
    </Zoom>
  </StatusBar>
);

const TaskSection = () => (
  <TaskBar>
    <StartButton aria-label="Start"><Icon w={16} h={16}><path d="M0 2.500l6.500-1v6H0zM7.500 1.300L16 0v7.500H7.500zM0 8.500h6.500v6l-6.500-1zM7.500 8.500H16V16l-8.500-1.300z" fill="#fff" stroke="none" /></Icon></StartButton>
    <SearchField>
      <Icon w={17} h={17}><circle cx="10.500" cy="6" r="5" strokeWidth="1.300" /><path d="M7 9.500L.5 16" strokeWidth="1.300" /></Icon>
      <SearchInput placeholder="Type here to search" aria-label="Type here to search" />
    </SearchField>
    <Apps>
      {taskApps.map((a) => <AppButton key={a.name} $state={a.state} aria-label={a.name}>{a.art}</AppButton>)}
    </Apps>
    <Spacer />
    <Tray>
      <Icon><path d="M4 13l6-6 6 6" strokeWidth="1.300" /></Icon>
      <Icon><path d="M6 3l4 2.500L6 8 2 5.500zM14 3l4 2.500L14 8l-4-2.500zM6 8l4 2.500L6 13l-4-2.500zM14 8l4 2.500-4 2.500-4-2.500zM10 12.500l3.500 2-3.500 2.500-3.500-2.500z" fill="currentColor" stroke="none" /></Icon>
      <Icon><path d="M7 6.500h10.500v8H6M18.500 9v3.500M3.500 4v3M6.500 4v3M2.500 7h5v2q-1 2-2.500 2t-2.500-2zM5 11v4" /><path d="M9 8.500h7v4H9z" fill="currentColor" /></Icon>
      <Icon><path d="M2.500 7.500h3l4-4v13l-4-4h-3zM12 8q1.500 2 0 4" /><path d="M14 6q3 4 0 8M16 4q4.500 6 0 12" stroke="#999" /></Icon>
      <TrayText>ENG</TrayText>
      <Clock>10:32 SA<br />04/12/2020</Clock>
      <Notices aria-label="Notifications">
        <Icon w={26} h={26}>
          <path d="M1 3h16v12H9l-3 3v-3H1z" fill="#fff" stroke="none" />
          <path d="M3.500 6.500h11M3.500 9.500h11M3.500 12.500h7" stroke="#333" />
          <circle cx="16.500" cy="18" r="7.500" fill="#3a3b39" stroke="#888" />
          <text x="13" y="22" fontSize="11" fontWeight="600" style={{ fill: "#fff" }}>5</text>
        </Icon>
      </Notices>
      <DesktopEdge aria-label="Show desktop" />
    </Tray>
  </TaskBar>
);

export default function App() {
  return (
    <Shell>
      <Global />
      <TitleSection />
      <MenuSection />
      <RibbonSection />
      <WorkSection />
      <StatusSection />
      <TaskSection />
    </Shell>
  );
}
